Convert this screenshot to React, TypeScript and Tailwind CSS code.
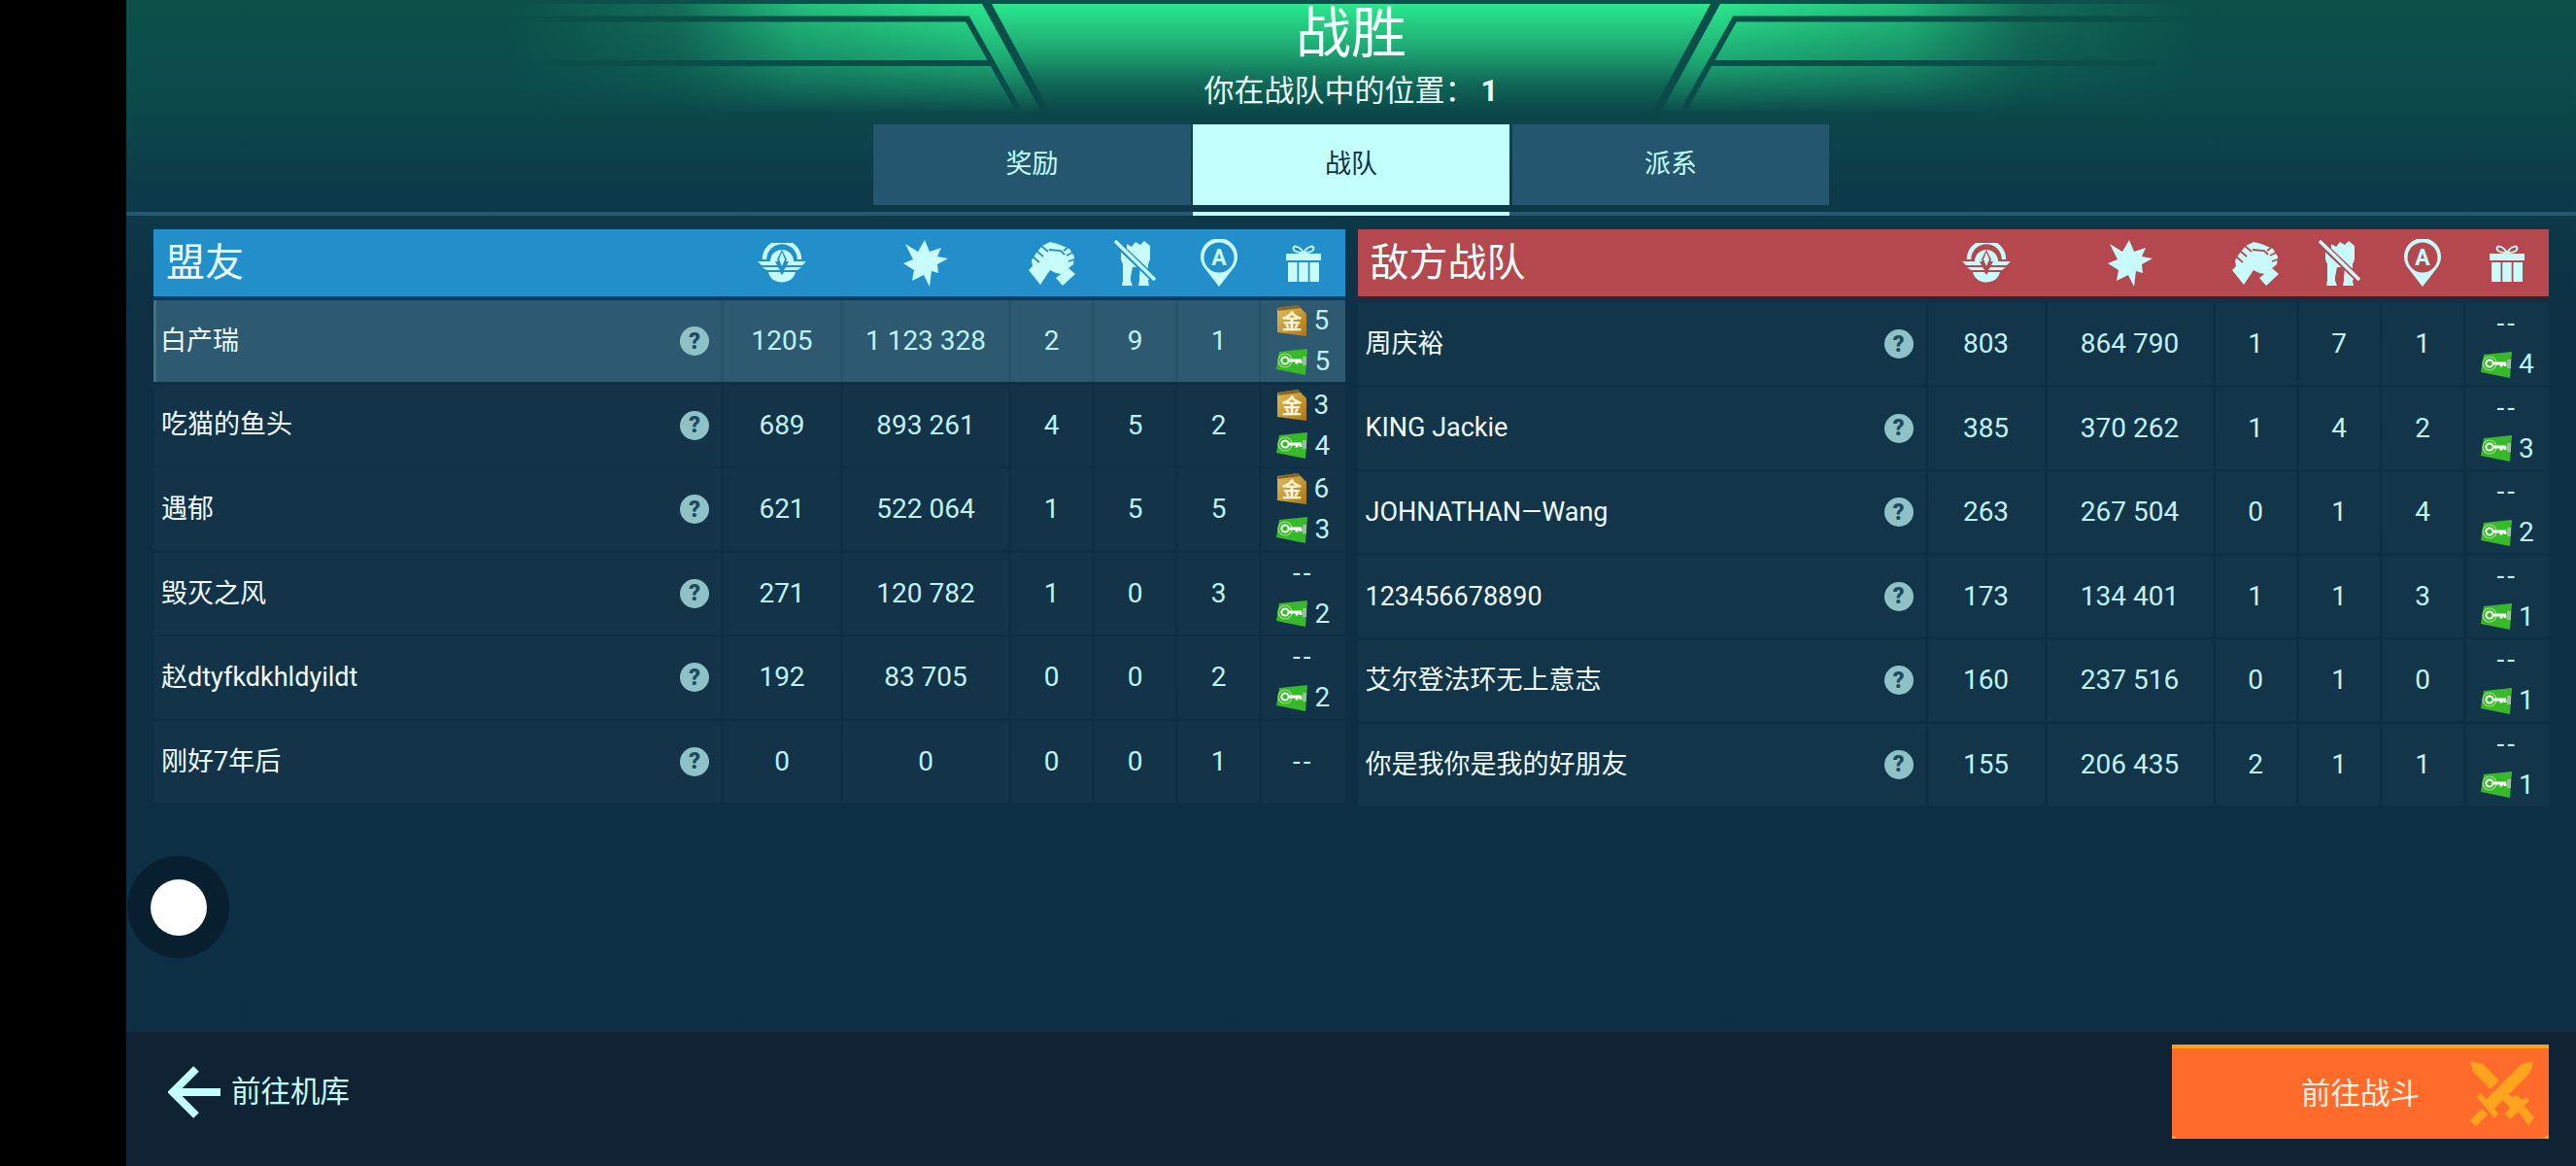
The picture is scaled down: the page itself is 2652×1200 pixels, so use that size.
import React from "react";

const ICON = "#c8fbfb";

function HeaderDecoration() {
  return (
    <svg className="absolute left-0 top-0" width="2522" height="130" viewBox="130 0 2522 130" fill="none">
      <defs>
        <linearGradient id="wl" gradientUnits="userSpaceOnUse" x1="520" y1="0" x2="1020" y2="0">
          <stop offset="0" stopColor="#2be88e" stopOpacity="0" />
          <stop offset="0.35" stopColor="#2be88e" stopOpacity="0.2" />
          <stop offset="0.6" stopColor="#2be88e" stopOpacity="0.72" />
          <stop offset="1" stopColor="#2be88e" stopOpacity="1" />
        </linearGradient>
        <linearGradient id="wr" gradientUnits="userSpaceOnUse" x1="2262" y1="0" x2="1762" y2="0">
          <stop offset="0" stopColor="#2be88e" stopOpacity="0" />
          <stop offset="0.35" stopColor="#2be88e" stopOpacity="0.2" />
          <stop offset="0.6" stopColor="#2be88e" stopOpacity="0.72" />
          <stop offset="1" stopColor="#2be88e" stopOpacity="1" />
        </linearGradient>
        <linearGradient id="vf" gradientUnits="userSpaceOnUse" x1="0" y1="4" x2="0" y2="118">
          <stop offset="0" stopColor="#fff" stopOpacity="1" />
          <stop offset="0.5" stopColor="#fff" stopOpacity="0.6" />
          <stop offset="1" stopColor="#fff" stopOpacity="0" />
        </linearGradient>
        <mask id="vm" maskUnits="userSpaceOnUse" x="130" y="0" width="2522" height="130">
          <rect x="130" y="0" width="2522" height="130" fill="url(#vf)" />
        </mask>
        <linearGradient id="cg" gradientUnits="userSpaceOnUse" x1="0" y1="4" x2="0" y2="115">
          <stop offset="0" stopColor="#2be88e" stopOpacity="1" />
          <stop offset="0.4" stopColor="#2be88e" stopOpacity="0.6" />
          <stop offset="0.75" stopColor="#2be88e" stopOpacity="0.16" />
          <stop offset="1" stopColor="#2be88e" stopOpacity="0" />
        </linearGradient>
      </defs>
      <polygon points="1021,4 1761,4 1701,115 1081,115" fill="url(#cg)" />
      <g mask="url(#vm)">
        <polygon points="400,4 1011,4 1072,115 400,115" fill="url(#wl)" />
        <polygon points="2382,4 1771,4 1710,115 2382,115" fill="url(#wr)" />
        <path d="M500 19.5H996L1048 112M560 65H1024" stroke="#0b4f4a" strokeWidth="6" />
        <path d="M2282 19.5H1786L1734 112M2222 65H1758" stroke="#0b4f4a" strokeWidth="6" />
      </g>
    </svg>
  );
}

function WingIcon({ bg }: { bg: string }) {
  return (
    <svg width="50" height="41" viewBox="0 0 50 41">
      <path d="M7 17A18 18 0 0 1 43 17" fill="none" stroke={ICON} strokeWidth="4.5" />
      <path d="M13 19A12 12 0 0 1 37 19Z" fill={ICON} />
      <polygon points="25,7 30,17 25,28 20,17" fill={bg} />
      <polygon points="25,9.5 28,17 25,24 22,17" fill={ICON} />
      <polygon points="0,19 18,19 20,23 4,23" fill={ICON} />
      <polygon points="5,25 21,25 23,28 9,28" fill={ICON} />
      <polygon points="50,19 32,19 30,23 46,23" fill={ICON} />
      <polygon points="45,25 29,25 27,28 41,28" fill={ICON} />
      <path d="M11 30L23 30L25 33L27 30L39 30C36 44 14 44 11 30Z" fill={ICON} />
    </svg>
  );
}

function BurstIcon() {
  return (
    <svg width="46" height="48" viewBox="0 0 46 48">
      <polygon points="22,0 27,12 39,8 35,17 46,19 35,25 36,34 29,32 27,48 21,36 9,42 11,31 0,24 10,20 2,4 15,12" fill={ICON} />
    </svg>
  );
}

function HandsIcon({ bg }: { bg: string }) {
  return (
    <svg width="48" height="46" viewBox="0 0 48 46">
      <path d="M0 30L4 26L3 20L8 12L14 5L22 1L30 3L42 8L47 16L46 24L34 34L28 33L22 30L12 45Z" fill={ICON} />
      <path d="M4 16L11 22M8 10L15 16M13 5L20 11" stroke={bg} strokeWidth="1.8" />
      <path d="M21 9L33 10L37 14M40 7L36 10M45 12L39 15M47 19L41 21" stroke={bg} strokeWidth="1.8" fill="none" />
      <polygon points="28,38 41,28 48,34 35,46" fill={ICON} />
    </svg>
  );
}

function RobotIcon({ bg }: { bg: string }) {
  return (
    <svg width="43" height="47" viewBox="0 0 43 47">
      <path d="M13 4L18 7L22 2L27 5L31 1L37 6V20L35 25V36L37 38L35 42L36 47H25L26 42V38L27 28H19L17 38V42L19 47H8L9 42V38L9 25L7 20V11H13Z" fill={ICON} />
      <path d="M0 1L43 42" stroke={bg} strokeWidth="7" />
      <path d="M1 1L42 41" stroke={ICON} strokeWidth="3.5" />
    </svg>
  );
}

function PinIcon({ bg }: { bg: string }) {
  return (
    <svg width="38" height="49" viewBox="0 0 38 49">
      <path d="M19 49L5 31A19 19 0 1 1 33 31Z" fill={ICON} />
      <circle cx="19" cy="19" r="15.5" fill={bg} />
      <text x="19" y="27" textAnchor="middle" fontSize="23" fontWeight="700" fill={ICON} fontFamily="Roboto, sans-serif">A</text>
    </svg>
  );
}

function GiftIcon() {
  return (
    <svg width="36" height="38" viewBox="0 0 36 38">
      <path d="M18 8C12 -1 6 1 8 5C9 8 14 8 18 8C22 8 27 8 28 5C30 1 24 -1 18 8Z" fill="none" stroke={ICON} strokeWidth="2" />
      <rect x="0" y="9" width="36" height="7" fill={ICON} />
      <rect x="2" y="18" width="9.5" height="20" fill={ICON} />
      <rect x="13.2" y="18" width="9.5" height="20" fill={ICON} />
      <rect x="24.5" y="18" width="9.5" height="20" fill={ICON} />
    </svg>
  );
}

function GoldBadge() {
  return (
    <svg width="30" height="32" viewBox="0 0 30 32">
      <defs>
        <linearGradient id="gold" x1="0" y1="0" x2="1" y2="1">
          <stop offset="0" stopColor="#e6bd55" />
          <stop offset="1" stopColor="#a9761a" />
        </linearGradient>
      </defs>
      <polygon points="0,3 21,0 30,9 30,32 0,28" fill="url(#gold)" />
      <polygon points="0,3 21,0 24,3 1,6" fill="#6e4f1a" opacity="0.75" />
      <text x="15" y="24" textAnchor="middle" fontSize="21" fontWeight="700" fill="#fff6d8" fontFamily="'Noto Sans CJK SC', sans-serif">金</text>
    </svg>
  );
}

function KeyBadge() {
  return (
    <svg width="32" height="27" viewBox="0 0 32 27">
      <polygon points="3,3 32,0 30,27 0,21" fill="#38b92c" />
      <rect x="27" y="8" width="4" height="9" fill="#9dbda3" />
      <circle cx="9" cy="12" r="7" fill="none" stroke="#9ae67a" strokeWidth="1.2" />
      <circle cx="9" cy="12" r="3.6" fill="none" stroke="#ffffff" strokeWidth="2" />
      <path d="M12.5 12H26M21 12V15.5M25 12V15" stroke="#ffffff" strokeWidth="2.8" />
    </svg>
  );
}

function Swords() {
  return (
    <svg width="66" height="67" viewBox="0 0 66 67" fill="#ffa41f">
      <polygon points="65,0 62,12 23,51 14,42 53,3" />
      <polygon points="7,37 11,33 29,54 25,59" />
      <polygon points="12,49 18,55 6,67 0,61" />
      <polygon points="0,0 13,3 30,20 21,29 3,11" />
      <polygon points="37,32 44,37 49,35 53,40 58,37 61,41 41,60 36,54 41,48 33,40" />
      <polygon points="48,50 54,44 66,58 60,66" />
    </svg>
  );
}

function Question() {
  return (
    <div className="flex h-[30px] w-[30px] items-center justify-center rounded-full bg-[#8fc2c7] text-[23px] font-black leading-none text-[#1d4a5e]">?</div>
  );
}

type Row = { name: string; score: string; dmg: string; a: string; b: string; c: string; gold?: string; key?: string };

const ally: Row[] = [
  { name: "白产瑞", score: "1205", dmg: "1 123 328", a: "2", b: "9", c: "1", gold: "5", key: "5" },
  { name: "吃猫的鱼头", score: "689", dmg: "893 261", a: "4", b: "5", c: "2", gold: "3", key: "4" },
  { name: "遇郁", score: "621", dmg: "522 064", a: "1", b: "5", c: "5", gold: "6", key: "3" },
  { name: "毁灭之风", score: "271", dmg: "120 782", a: "1", b: "0", c: "3", key: "2" },
  { name: "赵dtyfkdkhldyildt", score: "192", dmg: "83 705", a: "0", b: "0", c: "2", key: "2" },
  { name: "刚好7年后", score: "0", dmg: "0", a: "0", b: "0", c: "1" },
];

const enemy: Row[] = [
  { name: "周庆裕", score: "803", dmg: "864 790", a: "1", b: "7", c: "1", key: "4" },
  { name: "KING Jackie", score: "385", dmg: "370 262", a: "1", b: "4", c: "2", key: "3" },
  { name: "JOHNATHAN—Wang", score: "263", dmg: "267 504", a: "0", b: "1", c: "4", key: "2" },
  { name: "123456678890", score: "173", dmg: "134 401", a: "1", b: "1", c: "3", key: "1" },
  { name: "艾尔登法环无上意志", score: "160", dmg: "237 516", a: "0", b: "1", c: "0", key: "1" },
  { name: "你是我你是我的好朋友", score: "155", dmg: "206 435", a: "2", b: "1", c: "1", key: "1" },
];

function Num({ v, cell }: { v: string; cell: string }) {
  return <div className={`flex items-center justify-center ${cell}`}>{v}</div>;
}

function Rewards({ row, cell }: { row: Row; cell: string }) {
  if (!row.key) {
    return <div className={`flex items-center justify-center tracking-[3px] ${cell}`}>--</div>;
  }
  return (
    <div className={`grid grid-rows-2 ${cell}`}>
      <div className="flex items-center justify-center gap-[7px]">
        {row.gold ? (
          <>
            <GoldBadge />
            <span>{row.gold}</span>
          </>
        ) : (
          <span className="tracking-[3px]">--</span>
        )}
      </div>
      <div className="flex items-center justify-center gap-[7px]">
        <KeyBadge />
        <span>{row.key}</span>
      </div>
    </div>
  );
}

const COLS = "grid grid-cols-[584px_120px_170px_83px_83px_83px_1fr] gap-x-[3px]";

function Panel({ title, rows, color, strip, plain, offset, highlight }: { title: string; rows: Row[]; color: "blue" | "red"; strip: string; plain: string; offset: string; highlight?: number }) {
  const bg = color === "blue" ? "#228fca" : "#b5484f";
  return (
    <div className="flex-1">
      <div className={`${COLS} h-[73px] border-b-4 ${color === "blue" ? "bg-[#228fca]" : "bg-[#b5484f]"} ${strip}`}>
        <div className="flex items-center pl-[13px] text-[40px] leading-none text-[#eafdfd]">{title}</div>
        <div className="flex items-center justify-center"><WingIcon bg={bg} /></div>
        <div className="flex items-center justify-center"><BurstIcon /></div>
        <div className="flex items-center justify-center"><HandsIcon bg={bg} /></div>
        <div className="flex items-center justify-center"><RobotIcon bg={bg} /></div>
        <div className="flex items-center justify-center"><PinIcon bg={bg} /></div>
        <div className="flex items-center justify-center"><GiftIcon /></div>
      </div>
      <div className={`flex flex-col gap-[3px] ${offset}`}>
        {rows.map((r, i) => {
          const hi = i === highlight;
          const cell = hi ? "bg-[#2d5a70]" : plain;
          return (
            <div key={r.name} className={`${COLS} h-[83.6px] text-[28px] text-[#c0f2f5] ${hi ? "bg-[#295369]" : ""}`}>
              <div className={`flex items-center justify-between pr-[12px] text-[27px] text-[#f0fbfb] ${cell} ${hi ? "border-l-[3px] border-[#44707f] pl-[4px]" : "pl-[8px]"}`}>
                <span>{r.name}</span>
                <Question />
              </div>
              <Num v={r.score} cell={cell} />
              <Num v={r.dmg} cell={cell} />
              <Num v={r.a} cell={cell} />
              <Num v={r.b} cell={cell} />
              <Num v={r.c} cell={cell} />
              <Rewards row={r} cell={cell} />
            </div>
          );
        })}
      </div>
    </div>
  );
}

export default function App() {
  return (
    <div className="relative flex h-[1200px] w-full bg-black [font-family:Roboto,'Noto_Sans_CJK_SC',sans-serif]">
      <div className="w-[130px] shrink-0 bg-black" />
      <div className="flex min-w-0 flex-1 flex-col bg-[linear-gradient(180deg,#0c5049_0px,#0b4c4b_90px,#0c3b48_190px,#0d3044_330px,#0c2f43_100%)]">
        <header className="relative h-[236px] shrink-0">
          <HeaderDecoration />
          <div className="relative flex flex-col items-center">
            <div className="flex h-[68px] items-center text-[57px] leading-none text-[#f2fffb]">战胜</div>
            <div className="mt-[4px] flex h-[42px] items-center text-[31px] leading-none text-[#eafdf8]">
              你在战队中的位置：<span className="ml-[6px] font-bold">1</span>
            </div>
            <div className="mt-[14px] flex h-[83px] w-[984px] text-[27px]">
              <div className="flex w-[327px] items-center justify-center bg-[#25566f] text-[#c3fffd]">奖励</div>
              <div className="ml-[2px] flex w-[326px] items-center justify-center bg-[#c3fffd] text-[#0d3145]">战队</div>
              <div className="ml-[3px] flex w-[326px] items-center justify-center bg-[#25566f] text-[#c3fffd]">派系</div>
            </div>
            <div className="mt-[7px] flex h-[4px] w-full">
              <div className="flex-1 bg-[#265770]" />
              <div className="w-[326px] bg-[#c3fffd]" />
              <div className="flex-1 bg-[#265770]" />
            </div>
          </div>
        </header>

        <main className="flex flex-1 items-start gap-[13px] px-[28px]">
          <Panel title="盟友" rows={ally} color="blue" strip="border-[#043a5a]" plain="bg-[#123348]" offset="" highlight={0} />
          <Panel title="敌方战队" rows={enemy} color="red" strip="border-[#1f2b3c]" plain="bg-[#123549]" offset="mt-[3px]" />
        </main>

        <footer className="flex h-[138px] shrink-0 items-center justify-between bg-[#0f2335] pb-[28px] pl-[43px] pr-[28px] pt-[13px]">
          <div className="flex items-center gap-[11px] text-[30.5px] text-[#c3fffd]">
            <svg width="54" height="54" viewBox="0 0 54 54" fill="none" stroke="#c3fffd" strokeWidth="8">
              <path d="M29 3L5 27L29 51" />
              <path d="M5 27H54" />
            </svg>
            <span>前往机库</span>
          </div>
          <div className="relative flex h-[97px] w-[388px] items-center justify-center border-t-4 border-[#ffa012] bg-[#ff6b2b] text-[30.5px] text-[#fff2e4]">
            <span>前往战斗</span>
            <div className="absolute right-[15px] top-[13px]">
              <Swords />
            </div>
            <div className="absolute bottom-0 left-0 h-[3px] w-[4px] bg-[#ffa012]" />
            <div className="absolute bottom-0 right-0 h-[3px] w-[4px] bg-[#ffa012]" />
          </div>
        </footer>
      </div>

      <div className="absolute left-[131px] top-[881px] flex h-[105px] w-[105px] items-center justify-center rounded-full bg-[#071f2e]">
        <div className="h-[58px] w-[58px] rounded-full bg-white" />
      </div>
    </div>
  );
}
